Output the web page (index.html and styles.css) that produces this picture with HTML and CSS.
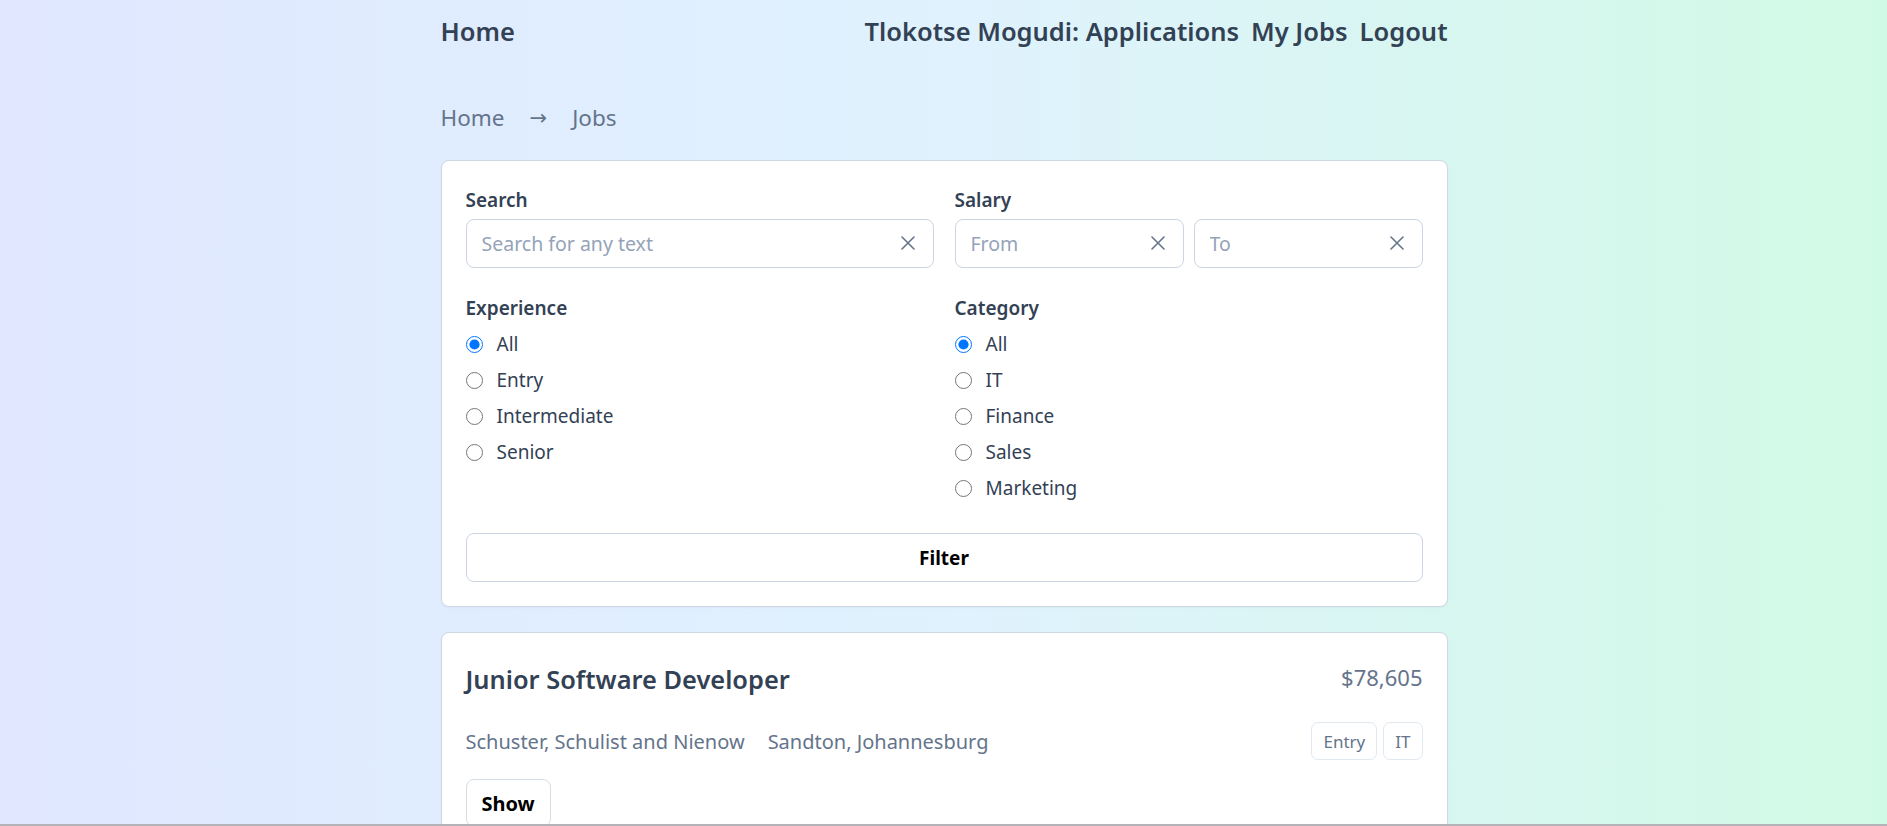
FILE: index.html
```html
<!DOCTYPE html>
<html lang="en">
<head>
<meta charset="utf-8">
<title>Jobs</title>
<link rel="stylesheet" href="styles.css">
</head>
<body>
<div class="page">
  <nav class="nav">
    <a class="nav-link" href="#">Home</a>
    <div class="nav-right">
      <a class="nav-link" href="#">Tlokotse Mogudi: Applications</a>
      <a class="nav-link" href="#">My Jobs</a>
      <a class="nav-link" href="#">Logout</a>
    </div>
  </nav>

  <div class="crumbs">
    <span>Home</span>
    <span class="arrow">→</span>
    <span>Jobs</span>
  </div>

  <form class="card filter-card">
    <div class="grid">
      <div class="field">
        <div class="label">Search</div>
        <div class="input-wrap">
          <input class="input" type="text" placeholder="Search for any text">
          <svg class="clear" viewBox="0 0 14 14" width="14" height="14"><path d="M1 1L13 13M13 1L1 13" stroke="#64748b" stroke-width="1.6" stroke-linecap="round" fill="none"/></svg>
        </div>
      </div>
      <div class="field">
        <div class="label">Salary</div>
        <div class="salary-row">
          <div class="input-wrap">
            <input class="input" type="text" placeholder="From">
            <svg class="clear" viewBox="0 0 14 14" width="14" height="14"><path d="M1 1L13 13M13 1L1 13" stroke="#64748b" stroke-width="1.6" stroke-linecap="round" fill="none"/></svg>
          </div>
          <div class="input-wrap">
            <input class="input" type="text" placeholder="To">
            <svg class="clear" viewBox="0 0 14 14" width="14" height="14"><path d="M1 1L13 13M13 1L1 13" stroke="#64748b" stroke-width="1.6" stroke-linecap="round" fill="none"/></svg>
          </div>
        </div>
      </div>
      <div class="field">
        <div class="label">Experience</div>
        <label class="radio"><input type="radio" name="exp" checked><span>All</span></label>
        <label class="radio"><input type="radio" name="exp"><span>Entry</span></label>
        <label class="radio"><input type="radio" name="exp"><span>Intermediate</span></label>
        <label class="radio"><input type="radio" name="exp"><span>Senior</span></label>
      </div>
      <div class="field">
        <div class="label">Category</div>
        <label class="radio"><input type="radio" name="cat" checked><span>All</span></label>
        <label class="radio"><input type="radio" name="cat"><span>IT</span></label>
        <label class="radio"><input type="radio" name="cat"><span>Finance</span></label>
        <label class="radio"><input type="radio" name="cat"><span>Sales</span></label>
        <label class="radio"><input type="radio" name="cat"><span>Marketing</span></label>
      </div>
    </div>
    <button class="btn btn-full" type="button">Filter</button>
  </form>

  <div class="card job-card">
    <div class="job-top">
      <h2 class="job-title">Junior Software Developer</h2>
      <div class="job-salary">$78,605</div>
    </div>
    <div class="job-meta">
      <div class="meta-left">
        <span>Schuster, Schulist and Nienow</span>
        <span>Sandton, Johannesburg</span>
      </div>
      <div class="tags">
        <span class="tag">Entry</span>
        <span class="tag">IT</span>
      </div>
    </div>
    <button class="btn btn-show" type="button">Show</button>
  </div>
</div>
<div class="frame-edge"></div>
</body>
</html>
```

FILE: styles.css
```css
* { box-sizing: border-box; }

html, body {
  margin: 0;
  padding: 0;
}

body {
  min-height: 100vh;
  font-family: "Noto Sans", "Open Sans", sans-serif;
  color: #334155;
  background: linear-gradient(to right, #e0e7ff 0%, #e0f2fe 50%, #d1fae5 100%);
  overflow: hidden;
}

.page {
  width: 1007px;
  margin: 0 auto;
  padding-left: 1px;
  box-sizing: content-box;
}

.nav {
  height: 62px;
  display: flex;
  align-items: center;
  justify-content: space-between;
}

.nav-right {
  display: flex;
  gap: 12px;
}

.nav-link {
  font-size: 25.5px;
  font-weight: 600;
  color: #334155;
  text-decoration: none;
  line-height: 30px;
}

.crumbs {
  display: flex;
  align-items: center;
  font-size: 22.5px;
  line-height: 30px;
  color: #64748b;
  padding: 41px 0 27px;
}

.crumbs .arrow {
  margin: 0 25px 0 25px;
  font-family: "DejaVu Sans", sans-serif;
  font-size: 21px;
}

.card {
  background: #ffffff;
  border: 1px solid #cfd8e3;
  border-radius: 8px;
  padding: 24px;
  box-shadow: 0 1px 2px rgba(15, 23, 42, 0.04);
}

.filter-card {
  margin: 0 0 25px;
}

.grid {
  display: grid;
  grid-template-columns: 1fr 1fr;
  column-gap: 21px;
  row-gap: 25px;
}

.field {
  display: flex;
  flex-direction: column;
}

.label {
  font-size: 19px;
  font-weight: 600;
  line-height: 30px;
  color: #334155;
  margin-bottom: 4px;
}

.salary-row {
  display: grid;
  grid-template-columns: 1fr 1fr;
  gap: 10px;
}

.input-wrap {
  position: relative;
  height: 49px;
}

.input {
  width: 100%;
  height: 49px;
  border: 1px solid #cbd5e1;
  border-radius: 8px;
  padding: 0 40px 0 15px;
  font-family: inherit;
  font-size: 19.5px;
  color: #334155;
  background: #fff;
  outline: none;
}

.input::placeholder {
  color: #94a3b8;
}

.clear {
  position: absolute;
  right: 19px;
  top: 17px;
}

.radio {
  display: flex;
  align-items: center;
  gap: 14px;
  height: 30px;
  margin-top: 6px;
  font-size: 19px;
  color: #334155;
}

.field .label + .radio {
  margin-top: 2px;
}

.radio input {
  width: 17px;
  height: 17px;
  margin: 0;
  accent-color: #0075ff;
}

.btn {
  font-family: inherit;
  font-weight: 700;
  font-size: 19px;
  color: #000;
  background: #fff;
  border: 1px solid #cbd5e1;
  border-radius: 8px;
  cursor: pointer;
}

.btn-full {
  display: block;
  width: 100%;
  height: 49px;
  margin-top: 30px;
}

.job-top {
  display: flex;
  justify-content: space-between;
  align-items: center;
  height: 44px;
}

.job-title {
  margin: 0;
  font-size: 25.4px;
  font-weight: 600;
  color: #334155;
  line-height: 44px;
}

.job-salary {
  font-size: 22px;
  color: #64748b;
  margin-top: -5px;
}

.job-meta {
  display: flex;
  justify-content: space-between;
  align-items: center;
  margin-top: 21px;
}

.meta-left {
  display: flex;
  gap: 23px;
  font-size: 20px;
  color: #64748b;
}

.tags {
  display: flex;
  gap: 6px;
}

.tag {
  display: inline-flex;
  align-items: center;
  height: 38px;
  padding: 0 11px;
  border: 1px solid #e2e8f0;
  border-radius: 7px;
  font-size: 17px;
  color: #64748b;
}

.btn-show {
  margin-top: 19px;
  height: 48px;
  padding: 0 15px;
  font-size: 20px;
  border-color: #d6dde6;
}

.frame-edge {
  position: fixed;
  left: 0;
  right: 0;
  bottom: 0;
  height: 2px;
  background: #b4b4b8;
}
```
